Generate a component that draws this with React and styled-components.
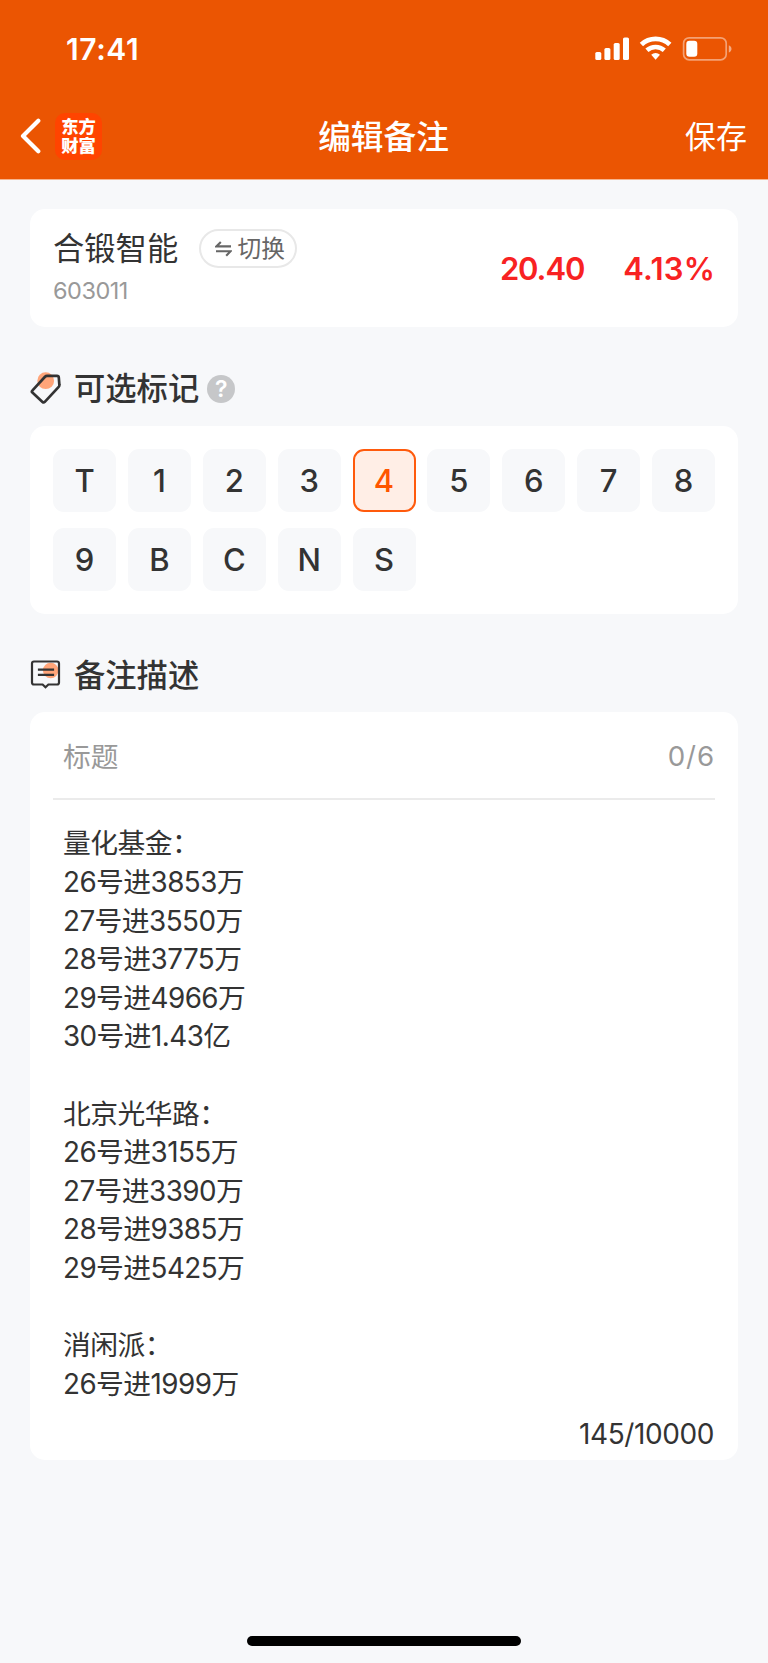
import { useState } from "react";

import styled, { createGlobalStyle } from "styled-components";

const GlobalStyle = createGlobalStyle`
  * {
    box-sizing: border-box;
  }

  body {
    margin: 0;
    background-color: #f7f8fa;
    font-family: Inter, "Noto Sans CJK SC", sans-serif;
    color: #333333;
  }

  button {
    font-family: inherit;
    color: inherit;
    border: 0;
    padding: 0;
    background: none;
  }
`;

const Page = styled.div`
  width: 768px;
  height: 1663px;
  display: flex;
  flex-direction: column;
  overflow: hidden;
`;

const Header = styled.header`
  height: 180px;
  background-color: #eb5502;
  border-bottom: 1px solid #f6b48e;
  color: white;
`;

const StatusBar = styled.div`
  height: 98px;
  padding: 0 35px 0 66px;
  display: flex;
  justify-content: space-between;
  align-items: center;
`;

const Time = styled.span`
  font-size: 30px;
  font-weight: 600;
  letter-spacing: 0.6px;
`;

const StatusIcons = styled.div`
  display: flex;
  align-items: center;
`;

const NavBar = styled.nav`
  height: 78px;
  padding: 0 21px 0 20px;
  display: grid;
  grid-template-columns: 1fr auto 1fr;
  align-items: center;
`;

const NavLeft = styled.div`
  height: 76px;
  display: flex;
  align-self: start;
  align-items: center;
  gap: 13px;
`;

const BackButton = styled.button`
  display: flex;
`;

const AppLogo = styled.div`
  width: 47px;
  height: 47px;
  display: flex;
  flex-direction: column;
  align-items: center;
  justify-content: center;
  border-radius: 10px;
  background-color: #ff4400;
  font-size: 17.3px;
  font-weight: 900;
  line-height: 19.5px;
`;

const NavTitle = styled.h1`
  margin: 0;
  font-size: 32.7px;
  font-weight: 500;
  line-height: 48px;
`;

const SaveButton = styled.button`
  justify-self: end;
  font-size: 31px;
  line-height: 48px;
`;

const Content = styled.main`
  flex: 1;
  padding: 29px 30px 0;
`;

const Card = styled.section`
  background-color: white;
  border-radius: 15px;
`;

const StockCard = styled(Card)`
  height: 118px;
  padding: 20px 24px 0 23px;
  display: flex;
  justify-content: space-between;
`;

const StockTop = styled.div`
  height: 40px;
  display: flex;
  align-items: flex-start;
  gap: 21px;
`;

const StockName = styled.span`
  font-size: 31.3px;
  line-height: 40px;
`;

const SwitchButton = styled.button`
  width: 98px;
  height: 39px;
  padding-left: 3px;
  display: flex;
  align-items: center;
  justify-content: center;
  gap: 6px;
  border: 2px solid #e8e8e8;
  border-radius: 20px;
  color: #666666;
  font-size: 23.7px;
  line-height: 34px;
`;

const StockCode = styled.div`
  margin-top: 7px;
  font-size: 23.5px;
  font-weight: 400;
  line-height: 30px;
  letter-spacing: -0.5px;
  color: #999999;
`;

const Quote = styled.div`
  height: 78px;
  display: flex;
  align-items: center;
  gap: 39px;
  color: #f82222;
  font-size: 31px;
  font-weight: 600;
`;

const Price = styled.span`
  letter-spacing: -1.1px;
`;

const Change = styled.span`
  margin-right: -1px;
  letter-spacing: 0.2px;
`;

const SectionTitle = styled.h2`
  height: ${({ $height }) => $height}px;
  margin: 0;
  padding-top: 25px;
  display: flex;
  align-items: center;
  font-size: 31.3px;
  font-weight: 500;
  line-height: 40px;

  span {
    margin: 0 8px 0 13px;
  }
`;

const HelpBadge = styled.i`
  width: 28px;
  height: 28px;
  margin-bottom: 1px;
  display: flex;
  align-items: center;
  justify-content: center;
  border-radius: 50%;
  background-color: #c6c7c9;
  color: white;
  font-size: 23px;
  font-style: normal;
  font-weight: 600;
  line-height: 28px;
`;

const MarkCard = styled(Card)`
  height: 188px;
  padding: 23px 23px 0;
  display: grid;
  grid-template-columns: repeat(9, 63px);
  grid-auto-rows: 63px;
  align-content: start;
  justify-content: space-between;
  row-gap: 16px;
`;

const Mark = styled.button`
  border: 2px solid ${({ $active }) => ($active ? "#ff5a0c" : "#f7f8fa")};
  border-radius: 11px;
  background-color: ${({ $active }) => ($active ? "#ffeee6" : "#f7f8fa")};
  color: ${({ $active }) => ($active ? "#ff5500" : "#333333")};
  font-size: 31px;
  font-weight: 500;
  line-height: 40px;
`;

const NoteCard = styled(Card)`
  height: 748px;
  padding: 0 23px;
`;

const TitleRow = styled.div`
  height: 88px;
  padding: 0 1px 0 10px;
  display: flex;
  justify-content: space-between;
  align-items: center;
  border-bottom: 2px solid #ebebeb;
  color: #999999;
  font-size: 27.7px;
  font-weight: 400;
`;

const TitleCount = styled.span`
  padding-top: 2px;
  letter-spacing: 0.9px;
  margin-right: -1px;
`;

const NoteText = styled.div`
  height: 604px;
  padding: 24.4px 10px 0;
  font-size: 27.8px;
  font-weight: 400;
  letter-spacing: -0.55px;
`;

const Line = styled.p`
  height: 38.6px;
  margin: 0;
  line-height: 38.6px;
  white-space: nowrap;
`;

const Counter = styled.div`
  padding-right: 1px;
  font-size: 28px;
  font-weight: 400;
  line-height: 60px;
  letter-spacing: -0.4px;
  text-align: right;
`;

const HomeIndicator = styled.div`
  width: 274px;
  height: 10px;
  margin: 0 auto 17px;
  border-radius: 5px;
  background-color: black;
`;

const marks = ["T", "1", "2", "3", "4", "5", "6", "7", "8", "9", "B", "C", "N", "S"];

const note = `量化基金：
26号进3853万
27号进3550万
28号进3775万
29号进4966万
30号进1.43亿

北京光华路：
26号进3155万
27号进3390万
28号进9385万
29号进5425万

消闲派：
26号进1999万`;

function PhoneStatus() {
  return (
    <StatusIcons>
      <svg width="138" height="26" viewBox="0 0 138 26" fill="white">
        <rect x="0.3" y="16" width="6" height="8" rx="1.6" />
        <rect x="9.4" y="12" width="6" height="12" rx="1.6" />
        <rect x="18.7" y="7" width="6" height="17" rx="1.6" />
        <rect x="28" y="1.5" width="6" height="22.5" rx="1.6" />
        <g fill="none" stroke="white">
          <path d="M46.4 8.4a20.8 20.8 0 0 1 28.4 0" strokeWidth="4.8" />
          <path d="M51.9 14.3a13 13 0 0 1 17.4 0" strokeWidth="4.6" />
        </g>
        <path d="M56.2 18.8a6.6 6.6 0 0 1 8.8 0L60.6 23.8z" />
        <rect x="88.6" y="1.8" width="42.6" height="22" rx="5.5" fill="none" stroke="white" strokeOpacity="0.45" strokeWidth="1.7" />
        <rect x="91.3" y="4.7" width="11" height="16" rx="3.2" />
        <path d="M133.8 9.2c3.6 1.4 3.6 6 0 7.4z" fillOpacity="0.5" />
      </svg>
    </StatusIcons>
  );
}

function TagIcon() {
  return (
    <svg width="31" height="34" viewBox="0 0 31 34">
      <circle cx="15.7" cy="8.7" r="8.4" fill="#ffa579" />
      <path
        d="M17 3.9h10c1.2 0 1.7.5 1.8 1.6l.6 7.5c.1.8-.1 1.3-.7 1.9L14.8 29.8c-.8.8-1.5.8-2.3.1L2.4 20.6c-.8-.7-.8-1.3-.1-2L15 4.8c.6-.6 1.1-.9 2-.9z"
        fill="none"
        stroke="#333333"
        strokeWidth="2.7"
      />
    </svg>
  );
}

function NoteIcon() {
  return (
    <svg width="31" height="31" viewBox="0 0 31 31">
      <circle cx="20.7" cy="10.5" r="7.8" fill="#ffa579" />
      <g fill="none" stroke="#333333" strokeWidth="2.2">
        <path d="M4 1.5h23c1.4 0 2 .6 2 2v19c0 1.4-.6 2-2 2h-8.6l-2.9 2.8-2.9-2.8H4c-1.4 0-2-.6-2-2v-19c0-1.4.6-2 2-2z" />
        <path d="M7.9 9.6h16.2M7.9 14.9h16.2" />
      </g>
    </svg>
  );
}

function App() {
  const [selected, setSelected] = useState("4");

  return (
    <Page>
      <GlobalStyle />
      <Header>
        <StatusBar>
          <Time>17:41</Time>
          <PhoneStatus />
        </StatusBar>
        <NavBar>
          <NavLeft>
            <BackButton aria-label="返回">
              <svg width="22" height="36" viewBox="0 0 22 36">
                <path
                  d="M18.3 2.8 3 18l15.3 15.2"
                  fill="none"
                  stroke="white"
                  strokeWidth="4.2"
                  strokeLinecap="round"
                  strokeLinejoin="round"
                />
              </svg>
            </BackButton>
            <AppLogo>
              <span>东方</span>
              <span>财富</span>
            </AppLogo>
          </NavLeft>
          <NavTitle>编辑备注</NavTitle>
          <SaveButton>保存</SaveButton>
        </NavBar>
      </Header>

      <Content>
        <StockCard>
          <div>
            <StockTop>
              <StockName>合锻智能</StockName>
              <SwitchButton>
                <svg width="17" height="16" viewBox="0 0 17 16">
                  <path
                    d="M5.8 1 1.4 5.4H16M1 10.2h14.6L11.2 14.8"
                    fill="none"
                    stroke="#666666"
                    strokeWidth="2.1"
                  />
                </svg>
                切换
              </SwitchButton>
            </StockTop>
            <StockCode>603011</StockCode>
          </div>
          <Quote>
            <Price>20.40</Price>
            <Change>4.13%</Change>
          </Quote>
        </StockCard>

        <SectionTitle $height={99}>
          <TagIcon />
          <span>可选标记</span>
          <HelpBadge>?</HelpBadge>
        </SectionTitle>
        <MarkCard>
          {marks.map((mark) => (
            <Mark
              key={mark}
              $active={mark === selected}
              onClick={() => setSelected(mark)}
            >
              {mark}
            </Mark>
          ))}
        </MarkCard>

        <SectionTitle $height={98}>
          <NoteIcon />
          <span>备注描述</span>
        </SectionTitle>
        <NoteCard>
          <TitleRow>
            <span>标题</span>
            <TitleCount>0/6</TitleCount>
          </TitleRow>
          <NoteText>
            {note.split("\n").map((line, index) => (
              <Line key={index}>{line}</Line>
            ))}
          </NoteText>
          <Counter>145/10000</Counter>
        </NoteCard>
      </Content>
      <HomeIndicator />
    </Page>
  );
}

export default App;
